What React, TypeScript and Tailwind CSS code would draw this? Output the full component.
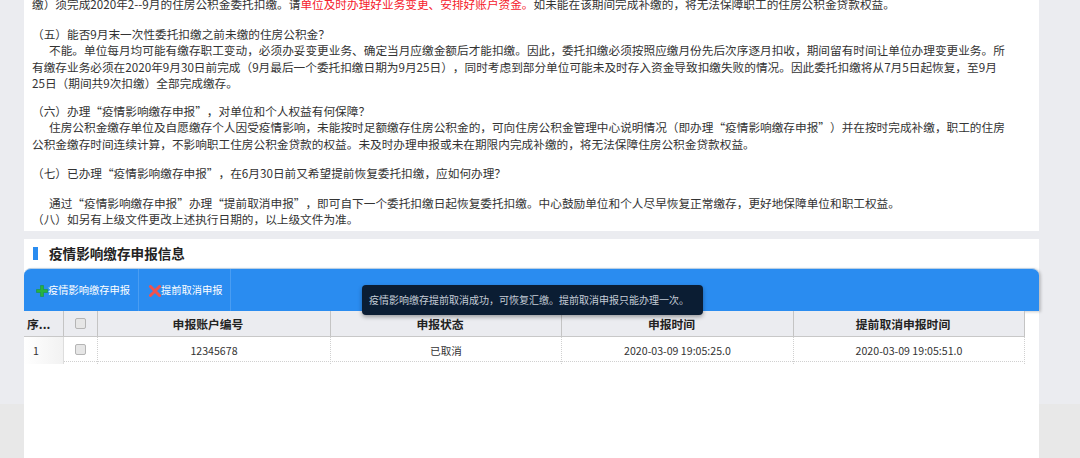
const lines = {
  five: [
    "不能。单位每月均可能有缴存职工变动，必须办妥变更业务、确定当月应缴金额后才能扣缴。因此，委托扣缴必须按照应缴月份先后次序逐月扣收，期间留有时间让单位办理变更业务。所",
    "有缴存业务必须在2020年9月30日前完成（9月最后一个委托扣缴日期为9月25日），同时考虑到部分单位可能未及时存入资金导致扣缴失败的情况。因此委托扣缴将从7月5日起恢复，至9月",
    "25日（期间共9次扣缴）全部完成缴存。",
  ],
  six: [
    "住房公积金缴存单位及自愿缴存个人因受疫情影响，未能按时足额缴存住房公积金的，可向住房公积金管理中心说明情况（即办理“疫情影响缴存申报”）并在按时完成补缴，职工的住房",
    "公积金缴存时间连续计算，不影响职工住房公积金贷款的权益。未及时办理申报或未在期限内完成补缴的，将无法保障住房公积金贷款权益。",
  ],
};

const Line = ({ children, className = "" }: { children: React.ReactNode; className?: string }) => (
  <div className={`h-[16.5px] leading-[16.5px] whitespace-nowrap ${className}`}>{children}</div>
);

const Checkbox = () => (
  <span className="block w-[11px] h-[11px] rounded-[2px] border border-[#b5b5b5] bg-[#e6e6e6]" />
);

const App = () => {
  return (
    <div
      className="
      h-[458px]
      overflow-hidden
      pl-[24px]
      bg-[linear-gradient(#ebecf0_404px,#e8e8e8_404px)]
      text-[#333]
      [text-spacing-trim:space-all]
      font-['Noto_Sans_CJK_SC',sans-serif]
      "
    >
      <div className="w-[1015px] h-[231px] bg-white overflow-hidden pl-[8px] text-[11.67px]">
        <div className="-mt-[4px]">
          <Line>
            缴）须完成2020年2--9月的住房公积金委托扣缴。请
            <span className="text-[#f5222d]">单位及时办理好业务变更、安排好账户资金。</span>
            如未能在该期间完成补缴的，将无法保障职工的住房公积金贷款权益。
          </Line>
          <Line className="mt-[13px]">（五）能否9月末一次性委托扣缴之前未缴的住房公积金？</Line>
          <Line className="pl-[17px]">{lines.five[0]}</Line>
          <Line>{lines.five[1]}</Line>
          <Line>{lines.five[2]}</Line>
          <Line className="mt-[11px]">（六）办理“疫情影响缴存申报”，对单位和个人权益有何保障？</Line>
          <Line className="pl-[17px]">{lines.six[0]}</Line>
          <Line>{lines.six[1]}</Line>
          <Line className="mt-[13px]">（七）已办理“疫情影响缴存申报”，在6月30日前又希望提前恢复委托扣缴，应如何办理？</Line>
          <Line className="mt-[13px] pl-[17px]">
            通过“疫情影响缴存申报”办理“提前取消申报”，即可自下一个委托扣缴日起恢复委托扣缴。中心鼓励单位和个人尽早恢复正常缴存，更好地保障单位和职工权益。
          </Line>
          <Line>（八）如另有上级文件更改上述执行日期的，以上级文件为准。</Line>
        </div>
      </div>

      <div className="relative w-[1015px] h-[300px] mt-[8px] bg-white">
        <div className="flex items-center h-[29px] pl-[9px]">
          <span className="w-[5px] h-[13px] bg-[#2a8cf0]" />
          <span className="ml-[11px] text-[13.6px] font-bold text-[#222]">疫情影响缴存申报信息</span>
        </div>

        <div className="flex h-[43px] rounded-t-[7px] bg-[#2a8cf0] border-t border-[#b9cfe4] text-[10.25px] text-white shadow-[2px_1px_3px_rgba(0,0,0,0.2)]">
          <div className="flex items-center w-[115px] pl-[12px] border-r border-[#4a9df2]">
            <svg viewBox="0 0 12 12" className="w-[12px] h-[12px] mt-[2px]">
              <path d="M4.5 0.5h3v4h4v3h-4v4h-3v-4h-4v-3h4z" fill="#27b43e" stroke="#1a8f2e" strokeWidth="0.5" />
            </svg>
            <span>疫情影响缴存申报</span>
          </div>
          <div className="flex items-center w-[92px] pl-[10px] border-r border-[#4a9df2]">
            <svg viewBox="0 0 12 12" className="w-[12px] h-[12px] mt-[2px]">
              <path d="M1.5 1.5L10.5 10.5M10.5 1.5L1.5 10.5" stroke="#f0524f" strokeWidth="3" strokeLinecap="round" />
            </svg>
            <span>提前取消申报</span>
          </div>
        </div>

        <div className="w-[1001px] text-[10.6px]">
          <div className="grid grid-cols-[40px_34px_233px_231px_232px_231px] h-[26px] bg-[#ebecf0] border-b border-[#c8c8c8] text-[11.8px] font-bold text-[#222] text-center leading-[25px]">
            <div className="border-r border-[#c4c4c4] text-left pl-[3px]">序...</div>
            <div className="flex items-center justify-center border-r border-[#c4c4c4]"><Checkbox /></div>
            <div className="border-r border-[#c4c4c4] pr-[12px]">申报账户编号</div>
            <div className="border-r border-[#c4c4c4] pr-[12px]">申报状态</div>
            <div className="border-r border-[#c4c4c4] pr-[12px]">申报时间</div>
            <div className="border-r border-[#c4c4c4] pr-[12px]">提前取消申报时间</div>
          </div>
          <div className="grid grid-cols-[40px_34px_233px_231px_232px_231px] h-[25px] border-b border-dotted border-[#d0d0d0] text-center leading-[27px]">
            <div className="border-r border-[#ddd] bg-[linear-gradient(90deg,#fff,#f2f2f2)] text-left pl-[9px]">1</div>
            <div className="flex items-center justify-center border-r border-dotted border-[#d0d0d0] pb-[2px]"><Checkbox /></div>
            <div className="border-r border-dotted border-[#d0d0d0]">12345678</div>
            <div className="border-r border-dotted border-[#d0d0d0]">已取消</div>
            <div className="border-r border-dotted border-[#d0d0d0]">2020-03-09 19:05:25.0</div>
            <div className="border-r border-dotted border-[#d0d0d0]">2020-03-09 19:05:51.0</div>
          </div>
        </div>

        <div
          className="
          absolute
          left-[338px]
          top-[46px]
          w-[341px]
          h-[30px]
          rounded-[4px]
          bg-[#0b1d33]
          shadow-[0_2px_4px_rgba(0,0,0,0.35)]
          text-[10px]
          leading-[30px]
          pl-[7px]
          whitespace-nowrap
          text-[#c4ccd6]
          "
        >
          疫情影响缴存提前取消成功，可恢复汇缴。提前取消申报只能办理一次。
        </div>
      </div>
    </div>
  );
};

export default App;
